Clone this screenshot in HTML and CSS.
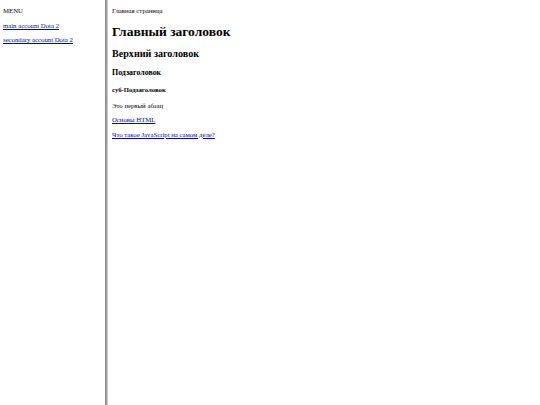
FILE: index.html
```html
<!DOCTYPE html>
<html lang="ru">
<head>
<meta charset="utf-8">
<title>Frames</title>
<link rel="stylesheet" href="styles.css">
</head>
<body>
<div class="layout">
  <nav class="menu">
    <div class="menu-title">MENU</div>
    <a class="menu-link" href="#">main account Dota 2</a>
    <a class="menu-link" href="#">secondary account Dota 2</a>
  </nav>
  <div class="divider"></div>
  <main class="main">
    <div class="page-title">Главная страница</div>
    <h1 class="h1">Главный заголовок</h1>
    <h2 class="h2">Верхний заголовок</h2>
    <h3 class="h3">Подзаголовок</h3>
    <h4 class="h4">суб-Подзаголовок</h4>
    <p class="para">Это первый абзац</p>
    <a class="main-link" href="#">Основы HTML</a>
    <a class="main-link" href="#">Что такое JavaScript на самом деле?</a>
  </main>
</div>
</body>
</html>
```

FILE: styles.css
```css
html, body {
  margin: 0;
  padding: 0;
  background: #fff;
}
body {
  font-family: "Liberation Serif", "Times New Roman", serif;
  font-size: 6.75px;
  color: #000;
}
.layout {
  display: flex;
  height: 405px;
}
.menu {
  box-sizing: border-box;
  width: 105px;
  flex: none;
  padding: 7px 3px 0;
  display: flex;
  flex-direction: column;
  align-items: flex-start;
  line-height: 8px;
}
.menu-link {
  color: #0000ee;
  margin-top: 6.5px;
}
.divider {
  flex: none;
  width: 1px;
  border-left: 1px solid #8a8a8a;
  border-right: 1px solid #c8c8c8;
  background: #a0a0a0;
}
.main {
  flex: 1;
  padding: 6.5px 4px 0;
  display: flex;
  flex-direction: column;
  align-items: flex-start;
}
.page-title { line-height: 8px; }
.h1 {
  font-size: 13.5px;
  line-height: 16px;
  margin: 9px 0 0;
}
.h2 {
  font-size: 10.125px;
  line-height: 12px;
  margin: 8.1px 0 0;
}
.h3 {
  font-size: 7.9px;
  line-height: 9px;
  margin: 8.2px 0 0;
}
.h4 {
  font-size: 6.75px;
  line-height: 8px;
  margin: 8.9px 0 0;
}
.para {
  line-height: 8px;
  margin: 8px 0 0;
}
.main-link {
  color: #0000ee;
  line-height: 8px;
  margin-top: 6.5px;
}
```
